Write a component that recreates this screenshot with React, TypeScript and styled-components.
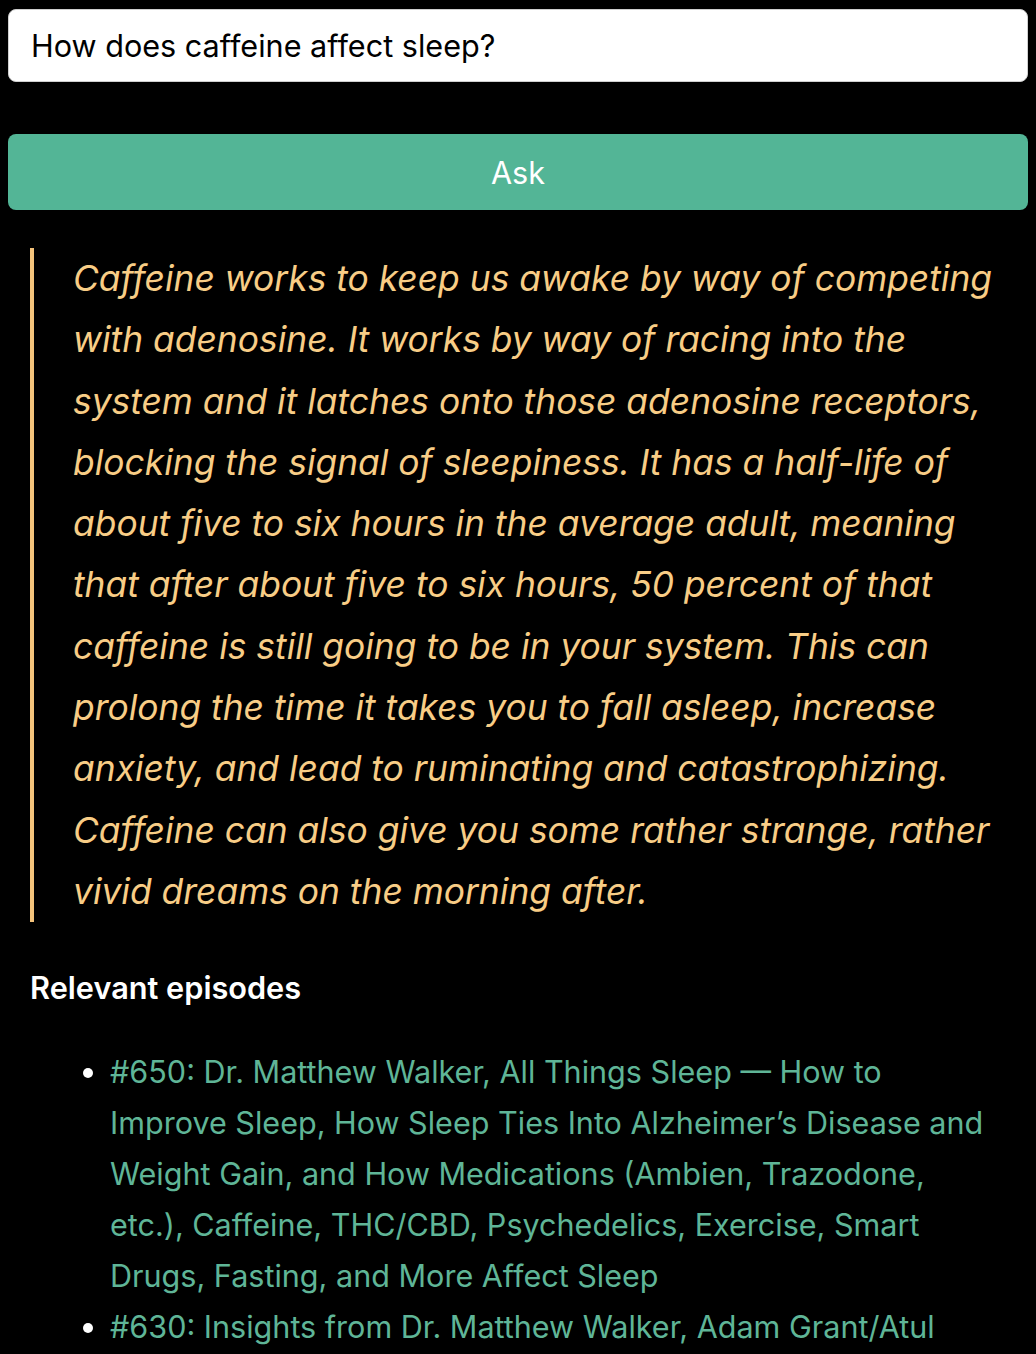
import React from "react";
import styled, { createGlobalStyle } from "styled-components";

const Global = createGlobalStyle`
  html, body { background: #000; }
  body {
    margin: 9px 8px 8px 8px;
    font-family: Inter, "Liberation Sans", Arial, sans-serif;
    color: #fff;
    -webkit-font-smoothing: antialiased;
  }
`;

const Page = styled.div`
  display: flex;
  flex-direction: column;
`;

const QuestionInput = styled.input`
  box-sizing: border-box;
  width: 100%;
  height: 73px;
  padding: 0 22px;
  border: 1px solid #cfcfcf;
  border-radius: 8px;
  background: #fff;
  color: #000;
  font-family: inherit;
  font-size: 30.6px;
  outline: none;
`;

const AskButton = styled.button`
  box-sizing: border-box;
  width: 100%;
  height: 76px;
  margin-top: 52px;
  border: none;
  border-radius: 8px;
  background: #53b596;
  color: #fff;
  font-family: inherit;
  font-size: 30.6px;
  cursor: pointer;
`;

const Result = styled.section`
  padding: 38px 8px 0 22px;
`;

const Quote = styled.blockquote`
  margin: 0;
  padding: 0 0 0 39px;
  border-left: 4px solid #f4c37b;
  color: #f8cd86;
  font-style: italic;
  font-size: 35.4px;
  line-height: 61.3px;
`;

const Heading = styled.h3`
  margin: 46px 0 0 0;
  font-size: 30.7px;
  font-weight: 600;
  line-height: 40px;
  color: #fff;
`;

const EpisodeList = styled.ul`
  margin: 38px 28px 0 0;
  padding-left: 80px;
  font-size: 30.55px;
  line-height: 51px;
  color: #5fb597;
  li::marker { color: #fff; }
`;

const Episode = styled.li``;

const EpisodeLink = styled.a`
  color: inherit;
  text-decoration: none;
`;

const episodes = [
  "#650: Dr. Matthew Walker, All Things Sleep \u2014 How to Improve Sleep, How Sleep Ties Into Alzheimer\u2019s Disease and Weight Gain, and How Medications (Ambien, Trazodone, etc.), Caffeine, THC/CBD, Psychedelics, Exercise, Smart Drugs, Fasting, and More Affect Sleep",
  "#630: Insights from Dr. Matthew Walker, Adam Grant/Atul Gawande, and More",
];

export default function App() {
  return (
    <Page>
      <Global />
      <QuestionInput defaultValue="How does caffeine affect sleep?" />
      <AskButton>Ask</AskButton>
      <Result>
        <Quote>
          Caffeine works to keep us awake by way of competing with adenosine. It works by way of racing into the system and it latches onto those adenosine receptors, blocking the signal of sleepiness. It has a half-life of about five to six hours in the average adult, meaning that after about five to six hours, 50 percent of that caffeine is still going to be in your system. This can prolong the time it takes you to fall asleep, increase anxiety, and lead to ruminating and catastrophizing. Caffeine can also give you some rather strange, rather vivid dreams on the morning after.
        </Quote>
        <Heading>Relevant episodes</Heading>
        <EpisodeList>
          {episodes.map((e) => (
            <Episode key={e}>
              <EpisodeLink href="#">{e}</EpisodeLink>
            </Episode>
          ))}
        </EpisodeList>
      </Result>
    </Page>
  );
}
